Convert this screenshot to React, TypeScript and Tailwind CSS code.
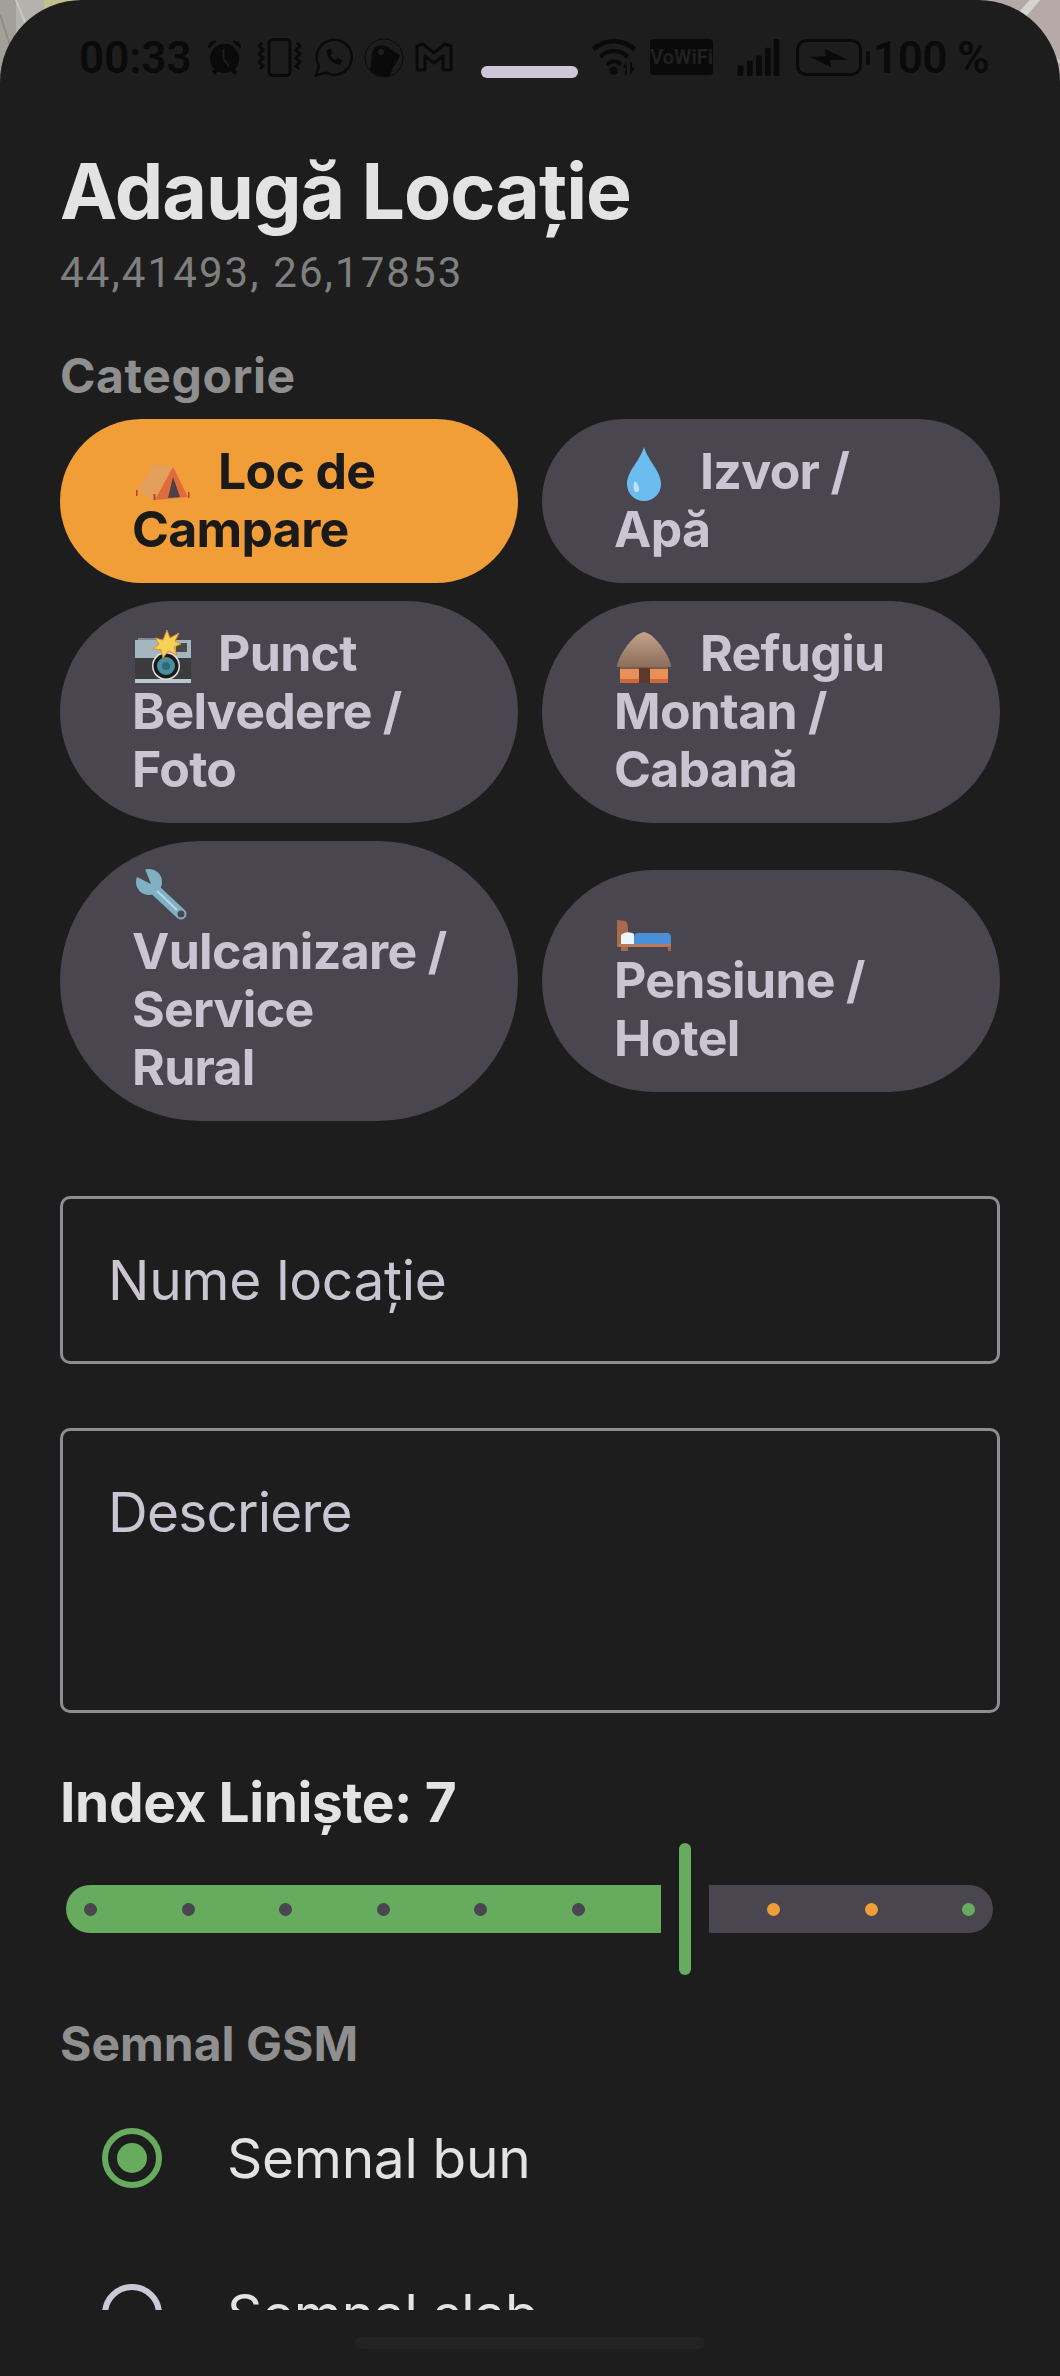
import React from 'react';

const font = { fontFamily: 'Inter, "Noto Sans", sans-serif' };
const roboto = { fontFamily: 'Roboto, sans-serif' };

const emoji = 'inline-block w-[56px] h-[56px] ml-[3px] align-[-12px]';

const Tent = () => (
  <svg viewBox="0 0 56 56" className={emoji}>
    <path d="M3 45 L18 20 L38 22 L20 55 Z" fill="#e39f5c" />
    <path d="M38 22 L53 52 L20 55 Z" fill="#df6a3c" />
    <path d="M38 32 L33 53 L45 52 Z" fill="#4a4248" />
    <path d="M1 45h1.500v6H1zM18.500 49h2v6h-2zM53 47h1.500v6H53z" fill="#a8492c" />
  </svg>
);

const Drop = () => (
  <svg viewBox="0 0 56 56" className={emoji}>
    <path d="M27 2 C31 16 44 26 44 39 C44 49 36 56 27 56 C18 56 10 49 10 39 C10 26 23 16 27 2 Z" fill="#6cbcf0" />
    <path d="M18 36 C15 42 17 48 20 47 C24 46 22 40 18 36 Z" fill="#bde3fa" />
  </svg>
);

const Camera = () => (
  <svg viewBox="0 0 56 56" className={emoji}>
    <rect x="3" y="11" width="17" height="4" fill="#7d8c94" />
    <rect x="0" y="13" width="56" height="18" fill="#a4b6c0" />
    <rect x="0" y="31" width="56" height="21" fill="#3b3b3b" />
    <rect x="0" y="52" width="56" height="4" fill="#b7c7cf" />
    <rect x="41" y="16" width="11" height="9" fill="#4b4b4b" />
    <circle cx="31" cy="39" r="14" fill="#e2e2e2" />
    <circle cx="31" cy="39" r="12.500" fill="#1b1b1b" />
    <circle cx="31" cy="39" r="9" fill="#4a8ea0" />
    <circle cx="31" cy="39" r="4" fill="#2f6a7a" />
    <path d="M32 3 L35 11 L44 6 L40 14 L46 17 L39 20 L42 28 L33 24 L28 31 L26 23 L18 22 L24 17 L20 11 L28 13 Z" fill="#f7d155" stroke="#e58a33" strokeWidth="1" />
  </svg>
);

const Hut = () => (
  <svg viewBox="0 0 56 56" className={emoji}>
    <defs>
      <linearGradient id="roof" x1="0" y1="0" x2="0" y2="1">
        <stop offset="0" stopColor="#c6a28a" />
        <stop offset="1" stopColor="#8a6e5b" />
      </linearGradient>
    </defs>
    <path d="M27 5 C36 6 50 24 54 38 L54 40 L0 40 L0 38 C4 24 18 6 27 5 Z" fill="url(#roof)" />
    <rect x="3" y="40" width="48" height="16" fill="#e98f58" />
    <rect x="3" y="52" width="48" height="4" fill="#d0673a" />
    <rect x="3" y="40" width="48" height="2" fill="#7a5c49" />
    <rect x="22" y="41" width="11" height="15" fill="#5a3a2c" />
  </svg>
);

const Wrench = () => (
  <svg viewBox="0 0 56 56" className={emoji}>
    <line x1="17" y1="20" x2="46" y2="47" stroke="#7fb0c4" strokeWidth="11" strokeLinecap="round" />
    <circle cx="14" cy="15" r="13" fill="#7fb0c4" />
    <path d="M16 17 L-2 8 L8 -3 Z" fill="#49464f" />
    <line x1="22" y1="24" x2="42" y2="43" stroke="#b7d8e4" strokeWidth="2" />
    <circle cx="46" cy="47" r="3.500" fill="#49464f" />
  </svg>
);

const Bed = () => (
  <svg viewBox="0 0 54 31" className="inline-block w-[54px] h-[31px] ml-[3px] align-[-11px]">
    <path d="M0 0 L8 1 C10 2 11 4 11 12 L11 31 L4 31 L4 27 L0 27 Z" fill="#a9694a" />
    <path d="M4 15 C8 11 14 12 17 14 L17 24 L4 24 Z" fill="#eaf7fb" />
    <path d="M17 16 C18 13 20 13 22 13 L50 13 C53 13 54 15 54 18 L54 24 L17 24 Z" fill="#4a90d9" />
    <rect x="2" y="24" width="52" height="3" fill="#b57b5c" />
    <rect x="51" y="26" width="3" height="5" fill="#a9694a" />
  </svg>
);

const chips = [
  { icon: <Tent />, spaced: true, active: true, lines: ['Loc de', 'Campare'] },
  { icon: <Drop />, spaced: true, lines: ['Izvor /', 'Apă'] },
  { icon: <Camera />, spaced: true, lines: ['Punct', 'Belvedere /', 'Foto'] },
  { icon: <Hut />, spaced: true, lines: ['Refugiu', 'Montan /', 'Cabană'] },
  { icon: <Wrench />, spaced: false, lines: ['Vulcanizare /', 'Service', 'Rural'] },
  { icon: <Bed />, spaced: false, lines: ['Pensiune /', 'Hotel'] },
];

const StatusBar = () => (
  <div className="relative h-[114px] text-[#0a0a0a]">
    <span className="absolute left-[79px] top-[32px] text-[44px] leading-[52px] font-semibold" style={roboto}>00:33</span>
    <svg viewBox="0 0 38 38" className="absolute left-[206px] top-[39px] w-[37px] h-[37px]" fill="#0a0a0a">
      <circle cx="19" cy="20" r="15" />
      <path d="M2 8 C3 3 7 1 11 2 L3 10zM36 8 C35 3 31 1 27 2 L35 10zM6 33l4-4 3 3-4 5zM32 33l-4-4-3 3 4 5z" />
      <path d="M18 10v11l6 7" stroke="#1d1d1d" strokeWidth="2" fill="none" />
    </svg>
    <svg viewBox="0 0 45 39" className="absolute left-[257px] top-[38px] w-[45px] h-[39px]" fill="none" stroke="#0a0a0a" strokeWidth="3">
      <rect x="12" y="1.500" width="21" height="36" rx="4" />
      <path d="M5 5l-3 3 4 4-4 4 4 4-4 4 4 4-3 3M40 5l3 3-4 4 4 4-4 4 4 4-4 4 3 3" />
    </svg>
    <svg viewBox="0 0 40 40" className="absolute left-[314px] top-[38px] w-[39px] h-[40px]" fill="none" stroke="#0a0a0a" strokeWidth="2.500">
      <path d="M2 38l3-10a18 18 0 1 1 7 7z" />
      <path d="M13 12c0 8 6 14 14 15l2-5-5-2-2 2c-3-1-4-3-5-5l2-2-2-5z" fill="#0a0a0a" stroke="none" />
    </svg>
    <svg viewBox="0 0 40 40" className="absolute left-[364px] top-[38px] w-[40px] h-[40px]">
      <circle cx="20" cy="20" r="19" fill="none" stroke="#0a0a0a" strokeWidth="1" />
      <path d="M6 33 C8 22 6 10 14 8 C22 5 26 11 36 17 C34 25 28 28 26 38 C18 39 11 37 6 33 Z" fill="#0a0a0a" />
      <circle cx="17" cy="14" r="3" fill="#1d1d1d" />
    </svg>
    <svg viewBox="0 0 38 30" className="absolute left-[415px] top-[42px] w-[38px] h-[30px]" fill="none" stroke="#0a0a0a" strokeWidth="3">
      <path d="M2 4 L8 2 L19 11 L30 2 L36 4 V28 H28 V14 L19 21 L10 14 V28 H2 Z" strokeLinejoin="round" />
    </svg>
    <div className="absolute left-[481px] top-[66px] w-[97px] h-[12px] rounded-full bg-[#cdc8d8]" />
    <svg viewBox="0 0 48 38" className="absolute left-[591px] top-[38px] w-[47px] h-[38px]" fill="#0a0a0a">
      <path d="M1 9a34 34 0 0 1 45 0l-3 4a28 28 0 0 0-39 0zM8 17a22 22 0 0 1 31 0l-3 4a16 16 0 0 0-25 0zM15 25a12 12 0 0 1 17 0l-3 4a6 6 0 0 0-11 0z" />
      <circle cx="23" cy="33" r="4" />
      <path d="M36 24l-4 6h3v7h2zM40 37l5-7h-3v-6h-2z" />
    </svg>
    <div className="absolute left-[650px] top-[39px] w-[63px] h-[36px] rounded-[4px] bg-[#0a0a0a] text-[#202020] flex items-center justify-center text-[20px] font-bold" style={roboto}>VoWiFi</div>
    <svg viewBox="0 0 44 38" className="absolute left-[737px] top-[39px] w-[44px] h-[37px]" fill="#0a0a0a">
      <rect x="0" y="27" width="6" height="11" rx="1.500" />
      <rect x="9.500" y="22" width="6" height="16" rx="1.500" />
      <rect x="19" y="17" width="6" height="21" rx="1.500" />
      <rect x="28" y="9" width="6" height="29" rx="1.500" />
      <rect x="37" y="0" width="6" height="38" rx="1.500" />
    </svg>
    <svg viewBox="0 0 74 37" className="absolute left-[796px] top-[39px] w-[74px] h-[37px]" fill="none">
      <rect x="1.500" y="1.500" width="63" height="34" rx="9" stroke="#0a0a0a" strokeWidth="3" />
      <path d="M14 18l16-1-1-7 23 11-18 0 1 7z" fill="#0a0a0a" />
      <rect x="70" y="12" width="4" height="14" rx="2" fill="#0a0a0a" />
    </svg>
    <span className="absolute left-[873px] top-[32px] text-[44px] leading-[52px] font-semibold whitespace-nowrap tracking-[-0.5px]" style={roboto}>100 %</span>
  </div>
);

const Dot = ({ c }: { c: string }) => <span className={`w-[13px] h-[13px] rounded-full ${c}`} />;

export default function App() {
  return (
    <div className="relative w-[1060px] h-[2376px] overflow-hidden bg-[#a9a6a0]" style={font}>
      {/* map peeking out behind the sheet */}
      <svg viewBox="0 0 1060 90" className="absolute left-0 top-0 w-[1060px] h-[90px]">
        <rect x="0" y="0" width="60" height="90" fill="#a3a09a" />
        <rect x="16" y="0" width="34" height="90" fill="#b4b2ac" />
        <path d="M0 14 L24 90" stroke="#8f8c86" strokeWidth="2" />
        <path d="M16 0 L40 60" stroke="#c9c7c1" strokeWidth="2" />
        <rect x="44" y="0" width="36" height="12" fill="#bfc28e" />
        <rect x="960" y="0" width="100" height="90" fill="#b6aaa9" />
        <path d="M1040 -6 L1016 22" stroke="#d6d4d0" strokeWidth="8" />
        <path d="M1040 50 L1060 62" stroke="#d0cdc8" strokeWidth="3" />
      </svg>
      <div className="relative h-full rounded-t-[82px] bg-[#1d1d1d]">
        <StatusBar />
        <div className="h-[2196px] overflow-hidden px-[60px]">
          <h1 className="mt-[32px] text-[77px] leading-[90px] font-bold tracking-[-1px] text-[#e3e3e3]">Adaugă Locație</h1>
          <p className="mt-[12px] text-[42px] leading-[50px] tracking-[2.1px] text-[#7f7f7f]" style={roboto}>44,41493, 26,17853</p>

          <h2 className="mt-[50px] text-[48px] leading-[56px] font-bold tracking-[0.6px] text-[#8f8f8f]">Categorie</h2>
          <div className="mt-[15px] grid grid-cols-2 gap-x-[24px] gap-y-[18px] items-center">
            {chips.map((c) => (
              <div
                key={c.lines[0]}
                className={`rounded-full px-[72px] pt-[23px] pb-[25px] text-[50px] leading-[58px] font-bold tracking-[-0.7px] ${c.active ? 'bg-[#f19d38] text-[#1a1a1a]' : 'bg-[#49464f] text-[#c9c5d2]'}`}
              >
                <div className="h-[58px] whitespace-nowrap">
                  {c.icon}
                  {c.spaced && <span className="inline-block w-[27px]" />}
                  {c.spaced && c.lines[0]}
                </div>
                {(c.spaced ? c.lines.slice(1) : c.lines).map((l) => (
                  <div key={l} className="whitespace-nowrap">{l}</div>
                ))}
              </div>
            ))}
          </div>

          <div className="mt-[75px] h-[168px] rounded-[10px] border-[3px] border-[#8f8d94] px-[45px] flex items-center text-[55px] tracking-[-0.3px] text-[#c9c5d2]">Nume locație</div>
          <div className="mt-[64px] h-[285px] rounded-[10px] border-[3px] border-[#8f8d94] px-[45px] pt-[46px] text-[55px] leading-[70px] tracking-[-0.8px] text-[#c9c5d2]">Descriere</div>

          <h2 className="mt-[57px] text-[55px] leading-[64px] font-bold tracking-[-0.4px] text-[#e3e3e3]">Index Liniște: 7</h2>
          <div className="mt-[9px] h-[132px] flex items-center gap-[18px] px-[6px]">
            <div className="w-[595px] h-[48px] rounded-l-full rounded-r-[4px] bg-[#67ab5e] flex items-center justify-between pl-[18px] pr-[76px]">
              {[0, 1, 2, 3, 4, 5].map((i) => <Dot key={i} c="bg-[#49464f]" />)}
            </div>
            <div className="w-[12px] h-[132px] rounded-full bg-[#67ab5e]" />
            <div className="w-[284px] h-[48px] rounded-r-full rounded-l-[4px] bg-[#49464f] flex items-center justify-between pl-[58px] pr-[18px]">
              <Dot c="bg-[#f19d38]" />
              <Dot c="bg-[#f19d38]" />
              <Dot c="bg-[#67ab5e]" />
            </div>
          </div>

          <h2 className="mt-[41px] text-[48px] leading-[56px] font-bold text-[#8f8f8f]">Semnal GSM</h2>
          <div className="mt-[56px] flex items-center pl-[42px] gap-[65px]">
            <span className="w-[60px] h-[60px] rounded-full border-[6px] border-[#67ab5e] flex items-center justify-center">
              <span className="w-[30px] h-[30px] rounded-full bg-[#67ab5e]" />
            </span>
            <span className="text-[55px] leading-[56px] tracking-[-0.3px] text-[#e3e3e3]">Semnal bun</span>
          </div>
          <div className="mt-[96px] flex items-center pl-[42px] gap-[65px]">
            <span className="w-[60px] h-[60px] rounded-full border-[6px] border-[#cdc8d8]" />
            <span className="text-[55px] leading-[56px] tracking-[-0.3px] text-[#e3e3e3]">Semnal slab</span>
          </div>
        </div>
      </div>
      <div className="absolute left-[355px] top-[2337px] w-[350px] h-[12px] rounded-full bg-[#232323]" />
    </div>
  );
}
